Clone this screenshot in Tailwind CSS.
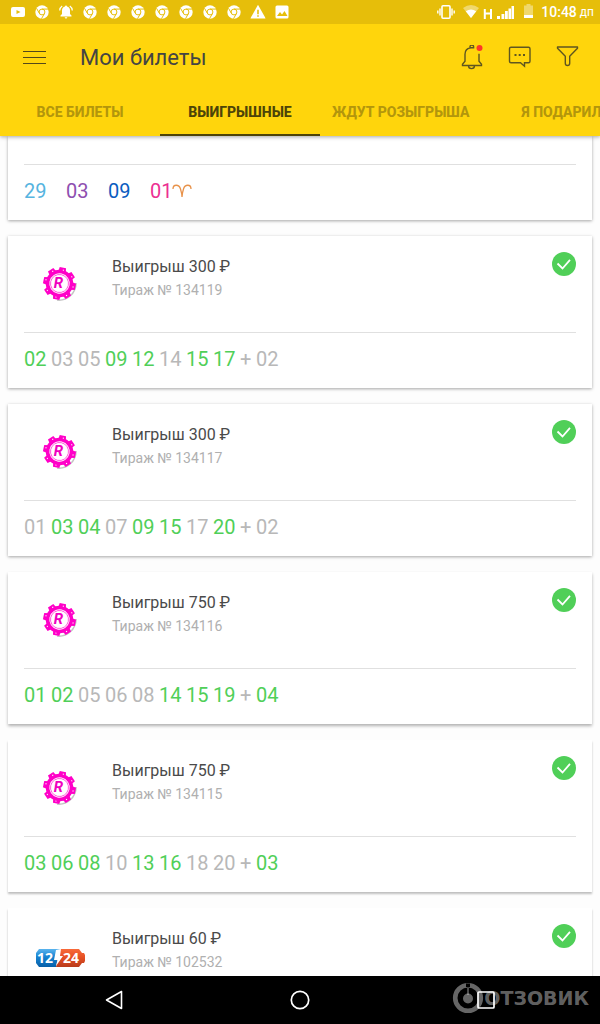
<!DOCTYPE html>
<html lang="ru">
<head>
<meta charset="utf-8">
<meta name="viewport" content="width=device-width, initial-scale=1">
<title>Мои билеты</title>
<script src="https://cdn.jsdelivr.net/npm/@tailwindcss/browser@4"></script>
</head>
<body class="flex h-screen flex-col overflow-hidden bg-[#fdfdfd] font-[Roboto,sans-serif] text-[#4a4a4a]">

<svg class="hidden" aria-hidden="true">
  <symbol id="chrome" viewBox="0 0 24 24">
    <circle cx="12" cy="12" r="11.5" fill="#fff"/>
    <g fill="none" stroke="#e6be0a" stroke-width="1.7"><circle cx="12" cy="12" r="5"/><path d="M12 7h10.300M7.700 14.500 2.600 5.700M16.300 14.500l-5.200 9"/></g>
  </symbol>
  <symbol id="check" viewBox="0 0 24 24">
    <circle cx="12" cy="12" r="12" fill="#50cf58"/>
    <path d="m5.500 11.500 5 5 7.500-8.700" fill="none" stroke="#fff" stroke-width="1.800"/>
  </symbol>
  <symbol id="chip" viewBox="0 0 48 48">
    <path d="M40 23a17 17 0 0 1-19 17" fill="none" stroke="#c4c4c4" stroke-width="1.500"/>
    <g transform="rotate(12 23.500 23.500)">
      <circle cx="23.500" cy="23.500" r="11.600" fill="none" stroke="#ff00c8" stroke-width="4.200"/>
      <g fill="#ff00c8">
        <path id="tooth" d="M19.500 12.500 20.300 7.200h6.400l.8 5.300z"/>
        <use href="#tooth" transform="rotate(45 23.500 23.500)"/><use href="#tooth" transform="rotate(90 23.500 23.500)"/>
        <use href="#tooth" transform="rotate(135 23.500 23.500)"/><use href="#tooth" transform="rotate(180 23.500 23.500)"/>
        <use href="#tooth" transform="rotate(225 23.500 23.500)"/><use href="#tooth" transform="rotate(270 23.500 23.500)"/>
        <use href="#tooth" transform="rotate(315 23.500 23.500)"/>
      </g>
      <circle cx="23.500" cy="23.500" r="14" fill="none" stroke="#fff" stroke-width="1" stroke-dasharray="1.200 9.796"/>
      <circle cx="23.500" cy="23.500" r="10.200" fill="#fff"/>
      <circle cx="23.500" cy="23.500" r="9" fill="none" stroke="#ff00c8" stroke-width=".6"/>
    </g>
    <text x="22.500" y="28" text-anchor="middle" font-family="Roboto, sans-serif" font-size="15" font-weight="700" font-style="italic" fill="#f000c0">R</text>
  </symbol>
</svg>

<header class="relative z-10 shrink-0 bg-[#ffd50c] shadow-[0_1px_4px_rgba(0,0,0,0.35)]">
  <div class="flex h-6 items-center justify-between bg-[#e6be0a] pr-[6px] pl-[11px] text-white">
    <div class="flex items-center gap-[10px]">
      <svg class="h-[14px] w-[14px]" viewBox="0 0 14 14"><rect y="2" width="14" height="10" rx="2" fill="#fff"/><path d="m5.500 5 4 2-4 2z" fill="#e6be0a"/></svg>
      <svg class="size-[14px]"><use href="#chrome"/></svg>
      <svg class="size-[14px]" viewBox="0 0 14 14" fill="#fff"><path d="M7 .5a1 1 0 0 1 1 1c2 .5 3 2 3 4V9l1.500 1.500v1h-11v-1L3 9V5.500c0-2 1-3.500 3-4a1 1 0 0 1 1-1zM5.700 12.200h2.600a1.300 1.300 0 0 1-2.600 0z"/><path d="M3.200 1Q.8 2.600.7 5.400M10.800 1q2.400 1.600 2.500 4.400" fill="none" stroke="#fff" stroke-width="1.200"/></svg>
      <svg class="size-[14px]"><use href="#chrome"/></svg>
      <svg class="size-[14px]"><use href="#chrome"/></svg>
      <svg class="size-[14px]"><use href="#chrome"/></svg>
      <svg class="size-[14px]"><use href="#chrome"/></svg>
      <svg class="size-[14px]"><use href="#chrome"/></svg>
      <svg class="size-[14px]"><use href="#chrome"/></svg>
      <svg class="size-[14px]"><use href="#chrome"/></svg>
      <svg class="size-[14px] scale-110" viewBox="0 0 14 14"><path d="m7 .5 7 12.500H0z" fill="#fff"/><path d="M6.300 5h1.400v4H6.300zm0 5h1.400v1.400H6.300z" fill="#e6be0a"/></svg>
      <svg class="size-[14px]" viewBox="0 0 14 14"><rect x=".5" y=".5" width="13" height="13" rx="1.500" fill="#fff"/><path d="m2 11 3-4 2 2.500L9.500 6l3 5z" fill="#e6be0a"/></svg>
    </div>
    <div class="flex items-center">
      <svg class="h-4 w-[18px]" viewBox="0 0 18 16" fill="none" stroke="#fff"><rect x="5" y="1.700" width="8" height="12.600" rx="1" stroke-width="1.600"/><path d="M3 4.500v7M15 4.500v7" stroke-width="1.400"/><path d="M.8 6.500v3M17.200 6.500v3" stroke-width="1.400"/></svg>
      <svg class="ml-2 h-4 w-4" viewBox="0 0 16 16" fill="#fff"><path d="M0 4q8-6 16 0L8 14z" opacity=".4"/><path d="M2.800 7.300q5.200-3.800 10.400 0L8 14z"/></svg>
      <svg class="ml-1 h-4 w-[10px]" viewBox="0 0 10 16"><path d="M1.800 5v10M8 5v10M1.800 9.500H8" stroke="#fff" stroke-width="2" fill="none"/></svg>
      <svg class="ml-1 h-4 w-[18px]" viewBox="0 0 18 16" fill="#fff"><path d="M0 12h3v3H0zM4.500 10h2.800v5H4.500zM8 7h2.800v8H8zM11.500 4.500h2.500V15h-2.500zM14.500 2H17v13h-2.500z"/></svg>
      <svg class="ml-[9px] h-4 w-[9px]" viewBox="0 0 9 16" fill="#fff"><path d="M2.500 0h4v1.500H9V14H0V1.500h2.500z" opacity=".4"/><path d="M0 11h9v3H0z"/></svg>
      <span class="ml-2 text-sm leading-6 font-medium">10:48</span>
      <span class="ml-[3px] text-xs leading-6">дп</span>
    </div>
  </div>

  <div class="flex h-[66px] items-center pt-[2px] pr-5 pl-[22px]">
    <button type="button" aria-label="Меню"><svg class="size-[26px]" viewBox="0 0 26 26"><path d="M1 6.500h23M1 12.500h23M1 18.500h23" stroke="#54491a" stroke-width="1.200"/></svg></button>
    <h1 class="ml-8 flex-1 text-[22px] leading-7 text-[#444]">Мои билеты</h1>
    <div class="flex items-center gap-[22px]">
      <button type="button" aria-label="Уведомления"><svg class="size-[26px]" viewBox="0 0 26 26" fill="none" stroke="#5f5620" stroke-width="1.400"><path d="M13 2.800C9 3.300 7 5.800 7 9.300v7l-2.500 3v1.200h19v-1.200l-2.500-3v-7.500M10.500 20.800a3 2.800 0 0 0 6 0M12 2.800V1.600a1.800 1.500 0 0 1 3.600 0v1.200z"/><circle cx="21.500" cy="3" r="3" fill="#ff3528" stroke="none"/></svg></button>
      <button type="button" aria-label="Сообщения"><svg class="size-[26px]" viewBox="0 0 26 26" fill="none" stroke="#5f5620" stroke-width="1.400"><path d="M5 2.200h17.500a1.500 1.500 0 0 1 1.500 1.500v12.500a1.500 1.500 0 0 1-1.500 1.500h-4v3.600l-4-3.600H5a1.500 1.500 0 0 1-1.500-1.500V3.700A1.500 1.500 0 0 1 5 2.200z"/><path d="M8.500 10h2M12.700 10h2M17 10h2" stroke-width="2"/></svg></button>
      <button type="button" aria-label="Фильтр"><svg class="size-[26px]" viewBox="0 0 26 26" fill="none" stroke="#5f5620" stroke-width="1.400" stroke-linejoin="round"><path d="M3.500 2h20v1.300l-7.800 8v7q0 2.200-2.200 2.200t-2.200-2.200v-7l-7.800-8z"/></svg></button>
    </div>
  </div>

  <div role="tablist" class="flex h-[46px] overflow-hidden text-sm font-extrabold whitespace-nowrap text-[#b3960c]">
    <button type="button" role="tab" aria-selected="false" class="w-40 shrink-0 border-b-2 border-transparent">ВСЕ БИЛЕТЫ</button>
    <button type="button" role="tab" aria-selected="true" class="w-40 shrink-0 border-b-2 border-[#4d4408] text-[#4d4408]">ВЫИГРЫШНЫЕ</button>
    <button type="button" role="tab" aria-selected="false" class="shrink-0 border-b-2 border-transparent px-3">ЖДУТ РОЗЫГРЫША</button>
    <button type="button" role="tab" aria-selected="false" class="w-40 shrink-0 border-b-2 border-transparent">Я ПОДАРИЛ</button>
  </div>
</header>

<main class="flex min-h-0 flex-1 flex-col gap-4 overflow-hidden px-2 text-xl leading-6 text-[#b8b8b8]">
  <article class="shrink-0 bg-white px-4 pt-7 shadow-[0_1px_3px_rgba(0,0,0,0.35)]">
    <p class="flex h-14 items-center gap-5 border-t border-[#e0e0e0] pb-1">
      <span class="w-[22px] text-[#56b4e0]">29</span><span class="w-[22px] text-[#8e4fb0]">03</span><span class="w-[22px] text-[#0a5cc0]">09</span>
      <span class="flex items-center text-[#ec2f92]"><span class="w-[22px]">01</span><svg class="h-5 w-5" viewBox="0 0 20 20" fill="none" stroke="#e8924a" stroke-width="1.300"><path d="M1 8c0-5 6-5 7.500 0 .8 2.500 1.500 5 1.500 8 0-3 .7-5.500 1.500-8C13 3 19 3 19 8"/></svg></span>
    </p>
  </article>

  <article class="shrink-0 bg-white px-4 shadow-[0_1px_3px_rgba(0,0,0,0.35)]">
    <div class="flex h-24 items-start">
      <svg class="mt-6 ml-3 size-12"><use href="#chip"/></svg>
      <div class="ml-7 flex-1 pt-[19px]"><h2 class="text-base leading-6 text-[#4a4a4a]">Выигрыш 300 ₽</h2><p class="text-sm leading-[22px] text-[#b0b0b0]">Тираж № 134119</p></div>
      <svg class="mt-4 size-6" role="img" aria-label="Выигрыш получен"><use href="#check"/></svg>
    </div>
    <p class="flex h-14 items-center gap-[5px] border-t border-[#e0e0e0] pb-1 *:w-[22px]"><span class="text-[#50cf58]">02</span> <span>03</span> <span>05</span> <span class="text-[#50cf58]">09</span> <span class="text-[#50cf58]">12</span> <span>14</span> <span class="text-[#50cf58]">15</span> <span class="text-[#50cf58]">17</span> <i class="max-w-[11px] not-italic">+</i> <span>02</span></p>
  </article>

  <article class="shrink-0 bg-white px-4 shadow-[0_1px_3px_rgba(0,0,0,0.35)]">
    <div class="flex h-24 items-start">
      <svg class="mt-6 ml-3 size-12"><use href="#chip"/></svg>
      <div class="ml-7 flex-1 pt-[19px]"><h2 class="text-base leading-6 text-[#4a4a4a]">Выигрыш 300 ₽</h2><p class="text-sm leading-[22px] text-[#b0b0b0]">Тираж № 134117</p></div>
      <svg class="mt-4 size-6" role="img" aria-label="Выигрыш получен"><use href="#check"/></svg>
    </div>
    <p class="flex h-14 items-center gap-[5px] border-t border-[#e0e0e0] pb-1 *:w-[22px]"><span>01</span> <span class="text-[#50cf58]">03</span> <span class="text-[#50cf58]">04</span> <span>07</span> <span class="text-[#50cf58]">09</span> <span class="text-[#50cf58]">15</span> <span>17</span> <span class="text-[#50cf58]">20</span> <i class="max-w-[11px] not-italic">+</i> <span>02</span></p>
  </article>

  <article class="shrink-0 bg-white px-4 shadow-[0_2px_3px_rgba(0,0,0,0.3)]">
    <div class="flex h-24 items-start">
      <svg class="mt-6 ml-3 size-12"><use href="#chip"/></svg>
      <div class="ml-7 flex-1 pt-[19px]"><h2 class="text-base leading-6 text-[#4a4a4a]">Выигрыш 750 ₽</h2><p class="text-sm leading-[22px] text-[#b0b0b0]">Тираж № 134116</p></div>
      <svg class="mt-4 size-6" role="img" aria-label="Выигрыш получен"><use href="#check"/></svg>
    </div>
    <p class="flex h-14 items-center gap-[5px] border-t border-[#e0e0e0] pb-1 *:w-[22px]"><span class="text-[#50cf58]">01</span> <span class="text-[#50cf58]">02</span> <span>05</span> <span>06</span> <span>08</span> <span class="text-[#50cf58]">14</span> <span class="text-[#50cf58]">15</span> <span class="text-[#50cf58]">19</span> <i class="max-w-[11px] not-italic">+</i> <span class="text-[#50cf58]">04</span></p>
  </article>

  <article class="shrink-0 bg-white px-4 shadow-[0_2px_2px_rgba(0,0,0,0.25)]">
    <div class="flex h-24 items-start">
      <svg class="mt-6 ml-3 size-12"><use href="#chip"/></svg>
      <div class="ml-7 flex-1 pt-[19px]"><h2 class="text-base leading-6 text-[#4a4a4a]">Выигрыш 750 ₽</h2><p class="text-sm leading-[22px] text-[#b0b0b0]">Тираж № 134115</p></div>
      <svg class="mt-4 size-6" role="img" aria-label="Выигрыш получен"><use href="#check"/></svg>
    </div>
    <p class="flex h-14 items-center gap-[5px] border-t border-[#e0e0e0] pb-1 *:w-[22px]"><span class="text-[#50cf58]">03</span> <span class="text-[#50cf58]">06</span> <span class="text-[#50cf58]">08</span> <span>10</span> <span class="text-[#50cf58]">13</span> <span class="text-[#50cf58]">16</span> <span>18</span> <span>20</span> <i class="max-w-[11px] not-italic">+</i> <span class="text-[#50cf58]">03</span></p>
  </article>

  <article class="shrink-0 bg-white px-4 shadow-[0_2px_2px_rgba(0,0,0,0.25)]">
    <div class="flex h-24 items-start">
      <svg class="mt-10 ml-3 h-5 w-[50px]" viewBox="0 0 50 20">
        <defs>
          <linearGradient id="blue" x2="0" y2="1"><stop stop-color="#5ab4ee"/><stop offset=".45" stop-color="#1682d0"/><stop offset="1" stop-color="#0860a8"/></linearGradient>
          <linearGradient id="red" x2="0" y2="1"><stop stop-color="#f86a3a"/><stop offset=".5" stop-color="#e44e22"/><stop offset="1" stop-color="#b83c1c"/></linearGradient>
        </defs>
        <path d="M3 1h21l-4 18H3l-3-4V5z" fill="url(#blue)"/>
        <path d="M24 1h19l3 4h2l1 2v6l-1 2h-2l-3 4H20z" fill="url(#red)"/>
        <text x="1" y="15" font-family="Open Sans, sans-serif" font-size="14" font-weight="700" fill="#fff">12</text>
        <text x="27" y="15" font-family="Open Sans, sans-serif" font-size="14" font-weight="700" fill="#fff">24</text>
        <path d="m20 2 5-1-1 7h3l-7 10 1.500-6H18z" fill="#fff"/>
      </svg>
      <div class="ml-[26px] flex-1 pt-[19px]"><h2 class="text-base leading-6 text-[#4a4a4a]">Выигрыш 60 ₽</h2><p class="text-sm leading-[22px] text-[#b0b0b0]">Тираж № 102532</p></div>
      <svg class="mt-4 size-6" role="img" aria-label="Выигрыш получен"><use href="#check"/></svg>
    </div>
  </article>
</main>

<nav class="relative z-10 flex h-12 shrink-0 items-center justify-center gap-[162px] bg-black" aria-label="Системная навигация">
  <button type="button" aria-label="Назад"><svg class="size-6" viewBox="0 0 24 24" fill="none" stroke="#fff" stroke-width="1.600" stroke-linejoin="round"><path d="M19.500 3.500v17L4.500 12z"/></svg></button>
  <button type="button" aria-label="Домой"><svg class="size-6" viewBox="0 0 24 24" fill="none" stroke="#fff" stroke-width="1.700"><circle cx="12" cy="12" r="8.700"/></svg></button>
  <button type="button" aria-label="Недавние"><svg class="size-6" viewBox="0 0 24 24" fill="none" stroke="#fff" stroke-width="1.700"><rect x="4" y="4" width="16" height="16" rx="1"/></svg></button>
  <div class="pointer-events-none absolute top-[6px] right-[11px] flex items-center text-white/40">
    <svg class="size-[32px]" viewBox="0 0 32 32"><circle cx="16" cy="16" r="12.800" fill="none" stroke="currentColor" stroke-width="4.600"/><path d="M16 6v7" stroke="currentColor" stroke-width="1.500"/><circle cx="16" cy="16.500" r="5" fill="currentColor"/><rect x="14" y="1.500" width="4" height="3.500" fill="#000"/></svg>
    <span class="font-['DejaVu_Sans'] text-[19px] leading-8 font-bold">ОТЗОВИК</span>
  </div>
</nav>
</body>
</html>
